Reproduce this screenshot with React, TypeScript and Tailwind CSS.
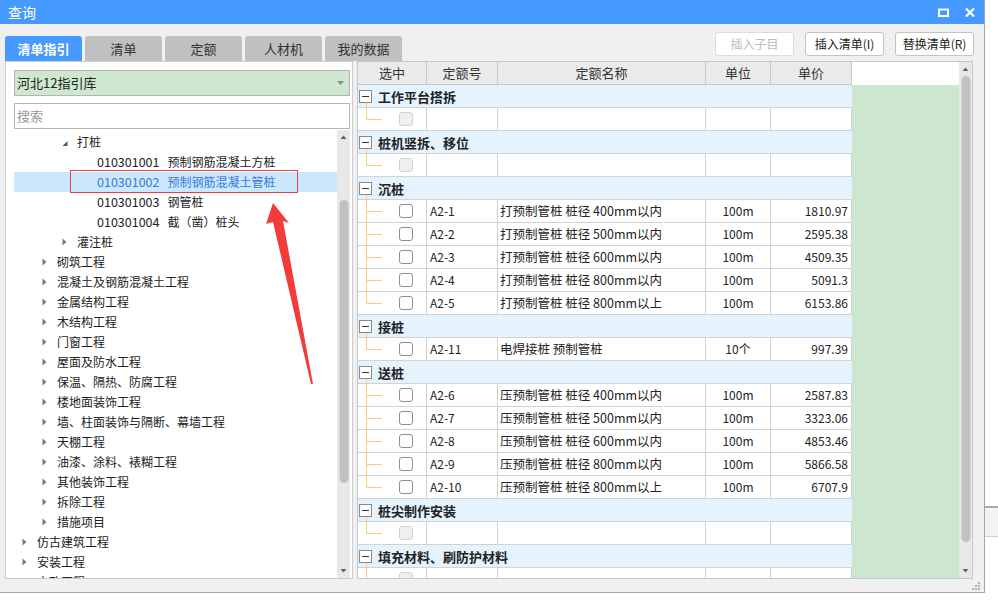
import React from "react";

type TreeRow = { lv: number; text: string; code?: string; state?: "open" | "closed"; sel?: boolean };

const tree: TreeRow[] = [
  { lv: 2, text: "打桩", state: "open" },
  { lv: 3, code: "010301001", text: "预制钢筋混凝土方桩" },
  { lv: 3, code: "010301002", text: "预制钢筋混凝土管桩", sel: true },
  { lv: 3, code: "010301003", text: "钢管桩" },
  { lv: 3, code: "010301004", text: "截（凿）桩头" },
  { lv: 2, text: "灌注桩", state: "closed" },
  { lv: 1, text: "砌筑工程", state: "closed" },
  { lv: 1, text: "混凝土及钢筋混凝土工程", state: "closed" },
  { lv: 1, text: "金属结构工程", state: "closed" },
  { lv: 1, text: "木结构工程", state: "closed" },
  { lv: 1, text: "门窗工程", state: "closed" },
  { lv: 1, text: "屋面及防水工程", state: "closed" },
  { lv: 1, text: "保温、隔热、防腐工程", state: "closed" },
  { lv: 1, text: "楼地面装饰工程", state: "closed" },
  { lv: 1, text: "墙、柱面装饰与隔断、幕墙工程", state: "closed" },
  { lv: 1, text: "天棚工程", state: "closed" },
  { lv: 1, text: "油漆、涂料、裱糊工程", state: "closed" },
  { lv: 1, text: "其他装饰工程", state: "closed" },
  { lv: 1, text: "拆除工程", state: "closed" },
  { lv: 1, text: "措施项目", state: "closed" },
  { lv: 0, text: "仿古建筑工程", state: "closed" },
  { lv: 0, text: "安装工程", state: "closed" },
  { lv: 0, text: "市政工程", state: "closed" },
];

const indent = ["pl-[8px]", "pl-[28px]", "pl-[48px]", "pl-[68px]"];

type GridRow =
  | { kind: "group"; title: string }
  | { kind: "item"; code?: string; name?: string; unit?: string; price?: string; last?: boolean };

const rows: GridRow[] = [
  { kind: "group", title: "工作平台搭拆" },
  { kind: "item", last: true },
  { kind: "group", title: "桩机竖拆、移位" },
  { kind: "item", last: true },
  { kind: "group", title: "沉桩" },
  { kind: "item", code: "A2-1", name: "打预制管桩 桩径 400mm以内", unit: "100m", price: "1810.97" },
  { kind: "item", code: "A2-2", name: "打预制管桩 桩径 500mm以内", unit: "100m", price: "2595.38" },
  { kind: "item", code: "A2-3", name: "打预制管桩 桩径 600mm以内", unit: "100m", price: "4509.35" },
  { kind: "item", code: "A2-4", name: "打预制管桩 桩径 800mm以内", unit: "100m", price: "5091.3" },
  { kind: "item", code: "A2-5", name: "打预制管桩 桩径 800mm以上", unit: "100m", price: "6153.86", last: true },
  { kind: "group", title: "接桩" },
  { kind: "item", code: "A2-11", name: "电焊接桩 预制管桩", unit: "10个", price: "997.39", last: true },
  { kind: "group", title: "送桩" },
  { kind: "item", code: "A2-6", name: "压预制管桩 桩径 400mm以内", unit: "100m", price: "2587.83" },
  { kind: "item", code: "A2-7", name: "压预制管桩 桩径 500mm以内", unit: "100m", price: "3323.06" },
  { kind: "item", code: "A2-8", name: "压预制管桩 桩径 600mm以内", unit: "100m", price: "4853.46" },
  { kind: "item", code: "A2-9", name: "压预制管桩 桩径 800mm以内", unit: "100m", price: "5866.58" },
  { kind: "item", code: "A2-10", name: "压预制管桩 桩径 800mm以上", unit: "100m", price: "6707.9", last: true },
  { kind: "group", title: "桩尖制作安装" },
  { kind: "item", last: true },
  { kind: "group", title: "填充材料、刷防护材料" },
  { kind: "item" },
];

function Caret({ state }: { state?: "open" | "closed" }) {
  if (state === "open")
    return (
      <svg className="shrink-0" width="15" height="20" viewBox="0 0 15 20">
        <polygon points="0.5,14 5.5,9 5.5,14" fill="#555" />
      </svg>
    );
  if (state === "closed")
    return (
      <svg className="shrink-0" width="15" height="20" viewBox="0 0 15 20">
        <polygon points="0.5,6.5 4.5,10 0.5,13.5" fill="#7a7a7a" />
      </svg>
    );
  return <span className="w-[15px]" />;
}

function Scrollbar({ thumbTop, thumbH, h }: { thumbTop: number; thumbH: number; h: number }) {
  return (
    <div className="relative w-[13px] shrink-0 bg-[#e8e8e8]">
      <svg className="absolute left-0 top-0" width="13" height={h} viewBox={`0 0 13 ${h}`}>
        <polygon points="3.5,9 6.5,5.5 9.5,9" fill="#606060" />
        <rect x="2.5" y={thumbTop} width="9" height={thumbH} rx="4.5" fill="#c1c1c1" />
        <polygon points={`3.5,${h - 9} 6.5,${h - 5.5} 9.5,${h - 9}`} fill="#606060" />
      </svg>
    </div>
  );
}

function Check({ disabled }: { disabled?: boolean }) {
  return (
    <span
      className={
        disabled
          ? "block h-[14px] w-[14px] rounded-[3px] border border-[#d2d2d2] bg-[#efefef]"
          : "block h-[14px] w-[14px] rounded-[3px] border border-[#8f8f8f] bg-white"
      }
    />
  );
}

export default function App() {
  return (
    <div className="relative h-[604px] w-[998px] overflow-hidden bg-white font-['Noto_Sans_CJK_SC','Microsoft_YaHei',sans-serif] text-[#222]">
      {/* something behind the dialog */}
      <div className="absolute left-[985px] top-[506px] h-[31px] w-[13px] border-t-2 border-b border-t-[#a8a8a8] border-b-[#cfcfcf] bg-[#f3f3f3]" />

      <div className="flex h-[593px] w-[985px] flex-col border-r border-b border-[#a6a6a6] bg-[#f0f0f0]">
        {/* title bar */}
        <div className="flex h-[24px] shrink-0 items-center bg-[#4599ff] pl-[8px] text-white">
          <span className="text-[14px] leading-none">查询</span>
          <div className="ml-auto flex items-center gap-[16px] pr-[9px]">
            <svg width="11" height="9" viewBox="0 0 11 9">
              <rect x="1" y="1.5" width="9" height="6.5" fill="none" stroke="#fff" strokeWidth="2" />
            </svg>
            <svg width="10" height="9" viewBox="0 0 10 9">
              <path d="M1 0.5 L9 8.5 M9 0.5 L1 8.5" stroke="#fff" strokeWidth="2.2" />
            </svg>
          </div>
        </div>

        {/* tabs + buttons */}
        <div className="flex h-[37px] shrink-0 pl-[5px] pr-[10px]">
          <div className="flex items-end gap-[3px]">
            <div className="flex h-[25px] w-[77px] items-center justify-center rounded-t-[3px] bg-[#4599ff] text-[13px] font-bold text-white">清单指引</div>
            {["清单", "定额", "人材机", "我的数据"].map((t) => (
              <div key={t} className="flex h-[25px] w-[77px] items-center justify-center rounded-t-[3px] bg-[#c0c0c0] text-[13px] text-[#333]">
                {t}
              </div>
            ))}
          </div>
          <div className="ml-auto mt-[8px] flex h-[24px] gap-[11px]">
            <button className="h-[24px] w-[79px] rounded-[3px] border border-[#dcdcdc] bg-white text-[12px] text-[#bdbdbd]">插入子目</button>
            <button className="h-[24px] w-[79px] rounded-[3px] border border-[#c4c4c4] bg-white text-[12px] text-[#222]">插入清单(I)</button>
            <button className="h-[24px] w-[79px] rounded-[3px] border border-[#c4c4c4] bg-white text-[12px] text-[#222]">替换清单(R)</button>
          </div>
        </div>

        {/* body */}
        <div className="flex h-[518px] shrink-0 gap-[4px] pl-[5px]">
          {/* left panel */}
          <div className="flex w-[348px] flex-col border border-[#cdcdcd] bg-white pl-[8px] pr-[2px] pt-[8px]">
            <div className="flex h-[26px] shrink-0 items-center border border-[#b4b4b4] bg-[#cde8cf] pl-[2px] pr-[5px] text-[13px]">
              <span>河北12指引库</span>
              <svg className="ml-auto" width="7" height="4" viewBox="0 0 7 4">
                <polygon points="0,0 7,0 3.5,4" fill="#8a8a8a" />
              </svg>
            </div>
            <div className="mt-[7px] flex h-[26px] shrink-0 items-center border border-[#b4b4b4] bg-white pl-[2px] text-[13px] text-[#9a9a9a]">搜索</div>
            <div className="mt-[1px] flex min-h-0 flex-1">
              <div className="flex-1 overflow-hidden pt-[2px]">
                {tree.map((r, i) => (
                  <div
                    key={i}
                    className={`flex h-[20px] items-center whitespace-nowrap text-[12px] ${indent[r.lv]} ${r.sel ? "bg-[#cce8ff] text-[#3779dc]" : ""}`}
                  >
                    {r.lv < 3 ? <Caret state={r.state} /> : <span className="w-[15px] shrink-0" />}
                    {r.code && <span className="mr-[8px] text-[12.5px]">{r.code}</span>}
                    <span>{r.text}</span>
                  </div>
                ))}
              </div>
              <Scrollbar thumbTop={70} thumbH={283} h={448} />
            </div>
          </div>

          {/* grid */}
          <div className="flex w-[616px] border border-[#c8c8c8] bg-white">
            <div className="flex w-[494px] flex-col overflow-hidden">
              <div className="flex h-[23px] shrink-0 border-b border-[#c4c4c4] bg-[#eaeaea] text-[13px] text-[#333]">
                <div className="flex w-[69px] items-center justify-center border-r border-[#c8c8c8]">选中</div>
                <div className="flex w-[71px] items-center justify-center border-r border-[#c8c8c8]">定额号</div>
                <div className="flex w-[208px] items-center justify-center border-r border-[#c8c8c8]">定额名称</div>
                <div className="flex w-[65px] items-center justify-center border-r border-[#c8c8c8]">单位</div>
                <div className="flex w-[81px] items-center justify-center border-r border-[#c8c8c8]">单价</div>
              </div>
              {rows.map((r, i) =>
                r.kind === "group" ? (
                  <div key={i} className="relative flex h-[23px] shrink-0 items-center border-b border-[#d2d2d2] bg-[#e5f3ff] pl-[1px]">
                    <svg className="absolute left-0 top-0" width="20" height="23" viewBox="0 0 20 23">
                      <line x1="8.5" y1="18" x2="8.5" y2="23" stroke="#fcc97d" />
                      <rect x="1.5" y="5.5" width="12" height="12" fill="#fff" stroke="#8a8a8a" />
                      <line x1="4" y1="11.5" x2="11" y2="11.5" stroke="#333" />
                    </svg>
                    <span className="ml-[19px] text-[13px] font-bold leading-none text-[#222]">{r.title}</span>
                  </div>
                ) : (
                  <div key={i} className="flex h-[23px] shrink-0 border-b border-[#d2d2d2]">
                    <div className="relative flex w-[69px] items-center border-r border-[#d2d2d2] pl-[41px]">
                      <svg className="absolute left-0 top-0" width="30" height="23" viewBox="0 0 30 23">
                        <line x1="8.5" y1="0" x2="8.5" y2={r.last ? 11.5 : 23} stroke="#fcc97d" />
                        <line x1="8.5" y1="11.5" x2="24" y2="11.5" stroke="#fcc97d" />
                      </svg>
                      <Check disabled={!r.code} />
                    </div>
                    <div className="flex w-[71px] items-center border-r border-[#d2d2d2] pl-[3px] text-[12px]">{r.code}</div>
                    <div className="flex w-[208px] items-center whitespace-nowrap border-r border-[#d2d2d2] pl-[2px] text-[12.5px]">
                      {r.name}
                    </div>
                    <div className="flex w-[65px] items-center justify-center border-r border-[#d2d2d2] text-[12px]">{r.unit}</div>
                    <div className="flex w-[81px] items-center justify-end border-r border-[#d2d2d2] pr-[3px] text-[12px]">{r.price}</div>
                  </div>
                )
              )}
            </div>
            <div className="flex w-[107px] flex-col">
              <div className="h-[23px] shrink-0 bg-white" />
              <div className="flex-1 bg-[#cce6cf]" />
            </div>
            <Scrollbar thumbTop={14} thumbH={466} h={516} />
          </div>
        </div>

        {/* bottom strip with grip */}
        <div className="flex flex-1 items-end justify-end pb-[2px] pr-[4px]">
          <svg width="8" height="8" viewBox="0 0 8 8">
            <rect x="6" y="0" width="2" height="2" fill="#b0b0b0" />
            <rect x="3" y="3" width="2" height="2" fill="#b0b0b0" />
            <rect x="6" y="3" width="2" height="2" fill="#b0b0b0" />
            <rect x="0" y="6" width="2" height="2" fill="#b0b0b0" />
            <rect x="3" y="6" width="2" height="2" fill="#b0b0b0" />
            <rect x="6" y="6" width="2" height="2" fill="#b0b0b0" />
          </svg>
        </div>
      </div>

      {/* annotation: red box and arrow */}
      <div className="pointer-events-none absolute left-[70px] top-[170px] h-[23px] w-[228px] border border-[#e84040]" />
      <svg className="pointer-events-none absolute left-0 top-0" width="998" height="604" viewBox="0 0 998 604">
        <polygon points="273,203 289,223 283,221 313,384 311,384 273,222 266,224" fill="#f23b3b" />
      </svg>
    </div>
  );
}
